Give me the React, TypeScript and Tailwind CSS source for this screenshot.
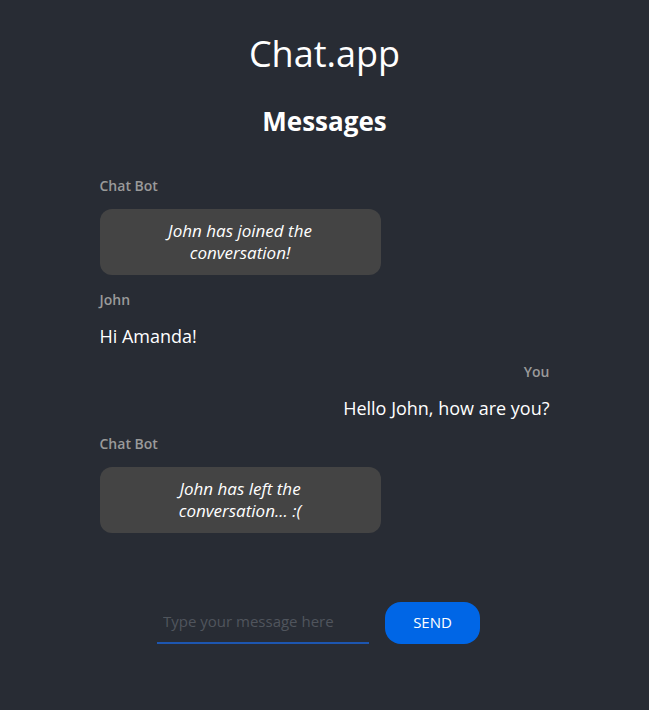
import { useState } from "react";

interface Message {
  sender: string;
  text: string;
  kind: "bot" | "other" | "self";
}

const messages: Message[] = [
  { sender: "Chat Bot", text: "John has joined the conversation!", kind: "bot" },
  { sender: "John", text: "Hi Amanda!", kind: "other" },
  { sender: "You", text: "Hello John, how are you?", kind: "self" },
  { sender: "Chat Bot", text: "John has left the conversation... :(", kind: "bot" },
];

export default function App() {
  const [draft, setDraft] = useState("");

  return (
    <div className="min-h-[710px] bg-[#282c34] text-white font-['Open_Sans',sans-serif] pt-[29px]">
      <h1 className="text-center text-[36px] leading-[50px]">Chat.app</h1>
      <h2 className="mt-[24px] text-center text-[26px] leading-[36px] font-bold">Messages</h2>

      <div className="mx-auto mt-[37px] w-[450px] flex flex-col gap-[13px]">
        {messages.map((m, i) => (
          <div key={i} className={m.kind === "self" ? "flex flex-col items-end" : "flex flex-col items-start"}>
            <span className="text-[14px] leading-[20px] font-semibold text-[#9a9a9a]">{m.sender}</span>
            {m.kind === "bot" ? (
              <div className="mt-[13px] mb-[2px] w-[281px] rounded-xl bg-[#444444] px-[40px] py-[11px] text-center italic text-[17px] leading-[22px]">
                {m.text}
              </div>
            ) : (
              <p className="mt-[13px] text-[18px] leading-[26px]">{m.text}</p>
            )}
          </div>
        ))}
      </div>

      <div className="mt-[66px] flex items-center justify-center gap-4 pr-3">
        <input
          value={draft}
          onChange={(e) => setDraft(e.target.value)}
          placeholder="Type your message here"
          className="w-[212px] bg-transparent border-b-2 border-[#1d56b0] px-[6px] pt-[9px] pb-[10px] text-[15px] leading-[22px] text-white placeholder:text-[#50555d] outline-none"
        />
        <button className="h-[42px] w-[95px] rounded-2xl bg-[#0066e6] text-[15px] text-white">
          SEND
        </button>
      </div>
    </div>
  );
}
